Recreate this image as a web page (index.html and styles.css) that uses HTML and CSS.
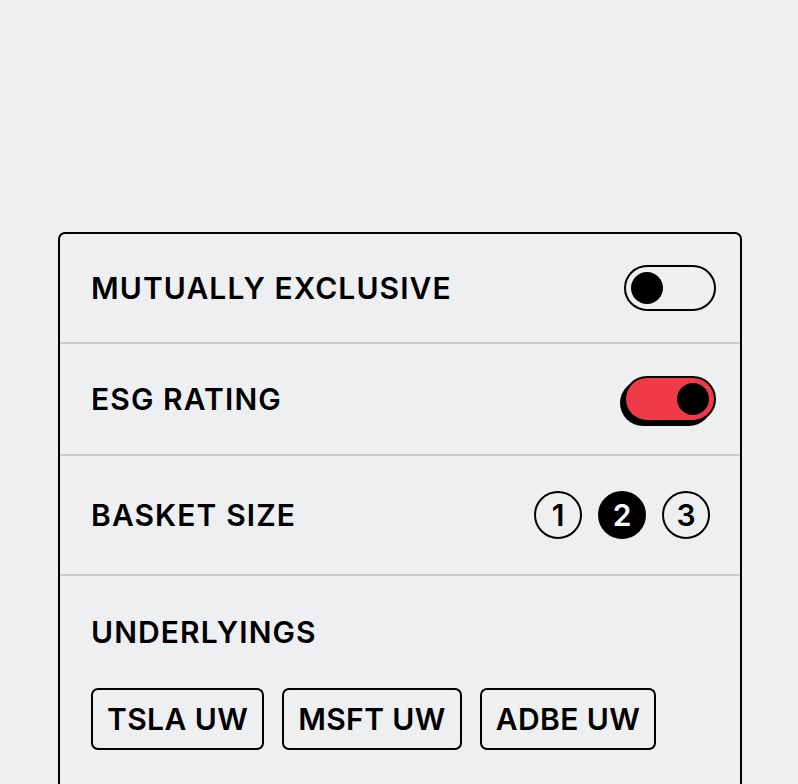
FILE: index.html
```html
<!DOCTYPE html>
<html lang="en">
<head>
    <meta charset="UTF-8">
    <meta name="viewport" content="width=device-width, initial-scale=1.0">
    <title>Basket settings</title>
    <link rel="stylesheet" href="styles.css">
</head>
<body>
    <div class="panel">
        <div class="row row-first">
            <div class="label">MUTUALLY EXCLUSIVE</div>
            <div class="toggle"><span class="knob"></span></div>
        </div>
        <div class="row row-second">
            <div class="label">ESG RATING</div>
            <div class="toggle on"><span class="knob"></span></div>
        </div>
        <div class="row row-third">
            <div class="label">BASKET SIZE</div>
            <div class="sizes">
                <span class="size">1</span>
                <span class="size active">2</span>
                <span class="size">3</span>
            </div>
        </div>
        <div class="row-stack">
            <div class="label">UNDERLYINGS</div>
            <div class="chips">
                <span class="chip">TSLA UW</span>
                <span class="chip">MSFT UW</span>
                <span class="chip">ADBE UW</span>
            </div>
        </div>
    </div>
</body>
</html>
```

FILE: styles.css
```css
body {
    margin: 0;
    background-color: #eeeff1;
    color: #000;
    font-family: Inter, "Liberation Sans", Arial, sans-serif;
    overflow: hidden;
}
.panel {
    margin: 232px 0 0 58px;
    width: 684px;
    box-sizing: border-box;
    border: 2px solid #000;
    border-bottom: none;
    border-radius: 7px 7px 0 0;
    height: 600px;
}
.row {
    display: flex;
    align-items: center;
    justify-content: space-between;
    padding: 0 24px 0 31px;
    border-bottom: 2px solid #c9c9cb;
}
.row-first {
    height: 108px;
}
.row-second {
    height: 110px;
}
.row-third {
    height: 118px;
}
.label {
    font-size: 30px;
    font-weight: 600;
    line-height: 36px;
    letter-spacing: 1.1px;
}
.toggle {
    position: relative;
    width: 92px;
    height: 46px;
    box-sizing: border-box;
    border: 2px solid #000;
    border-radius: 23px;
}
.knob {
    position: absolute;
    top: 5px;
    left: 5px;
    width: 32px;
    height: 32px;
    border-radius: 50%;
    background-color: #000;
}
.toggle.on {
    background-color: #f03a48;
    box-shadow: -4px 4px 0 #000;
}
.toggle.on .knob {
    left: auto;
    right: 5px;
}
.sizes {
    display: flex;
    gap: 16px;
    margin-right: 6px;
}
.size {
    display: flex;
    align-items: center;
    justify-content: center;
    width: 48px;
    height: 48px;
    box-sizing: border-box;
    border: 2px solid #000;
    border-radius: 50%;
    font-size: 30px;
    font-weight: 600;
}
.size.active {
    background-color: #000;
    color: #fff;
}
.row-stack {
    padding: 38px 24px 0 31px;
}
.chips {
    display: flex;
    gap: 18px;
    margin-top: 38px;
}
.chip {
    display: flex;
    align-items: center;
    height: 62px;
    box-sizing: border-box;
    padding: 0 14px;
    border: 2px solid #000;
    border-radius: 7px;
    font-size: 30px;
    font-weight: 600;
    letter-spacing: 0.4px;
}
```
